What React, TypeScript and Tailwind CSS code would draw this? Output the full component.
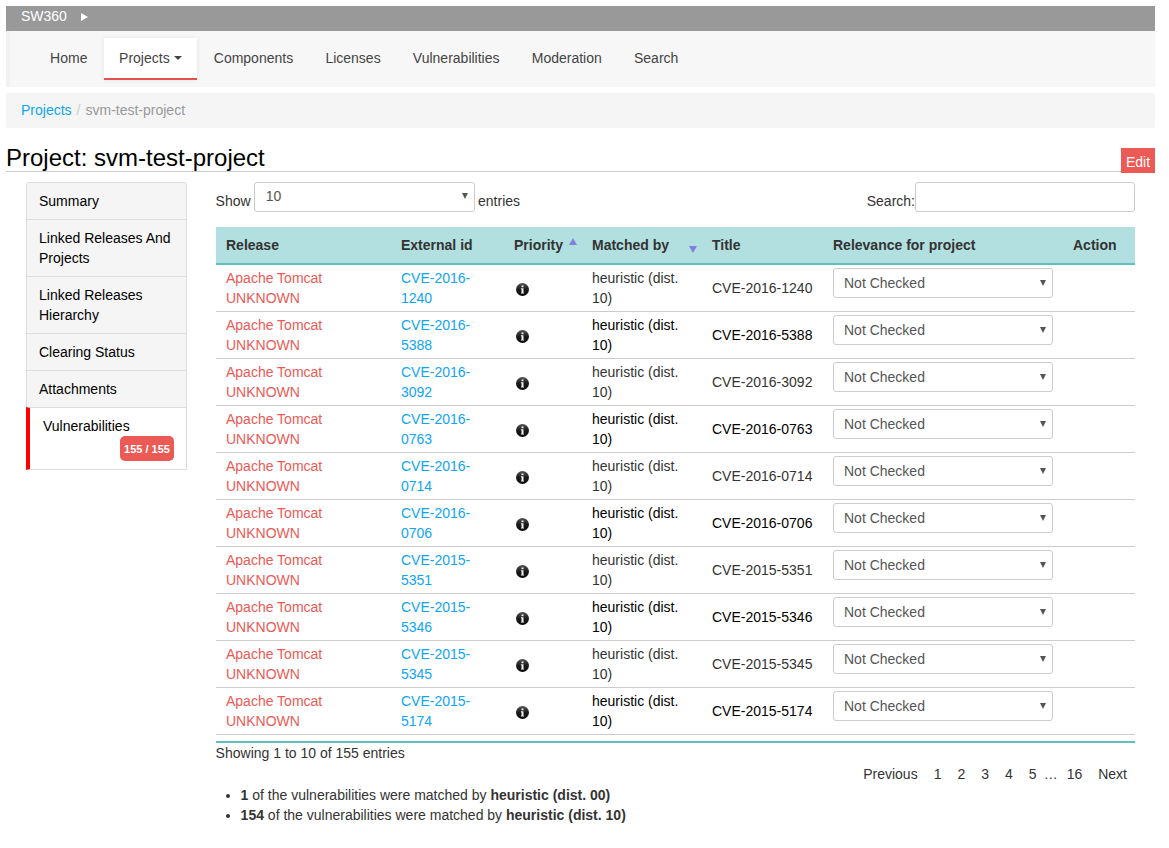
import { FC } from 'react';

const NAV_ITEMS = ['Home', 'Projects', 'Components', 'Licenses', 'Vulnerabilities', 'Moderation', 'Search'];

const SIDE_ITEMS = ['Summary', 'Linked Releases And Projects', 'Linked Releases Hierarchy', 'Clearing Status', 'Attachments'];

const CVES = [
  ['2016', '1240'],
  ['2016', '5388'],
  ['2016', '3092'],
  ['2016', '0763'],
  ['2016', '0714'],
  ['2016', '0706'],
  ['2015', '5351'],
  ['2015', '5346'],
  ['2015', '5345'],
  ['2015', '5174'],
];

const InfoIcon: FC<{ id: string }> = ({ id }) => (
  <svg width="13" height="13" viewBox="0 0 13 13" className="block">
    <defs>
      <linearGradient id={id} x1="0" y1="0" x2="0" y2="1">
        <stop offset="0" stopColor="#555" />
        <stop offset="0.5" stopColor="#1a1a1a" />
        <stop offset="1" stopColor="#0a0a0a" />
      </linearGradient>
    </defs>
    <circle cx="6.5" cy="6.5" r="6.5" fill={`url(#${id})`} />
    <rect x="5.5" y="2.5" width="2" height="1.7" fill="#f2f2f2" />
    <path d="M4.9 5.3h2.6v4.4h0.6v0.9H4.9v-0.9h0.6V6.2H4.9z" fill="#f2f2f2" />
  </svg>
);

const VulnRow: FC<{ year: string; id: string; index: number }> = ({ year, id, index }) => {
  const textColor = index % 2 === 0 ? 'text-[#333]' : 'text-black';
  return (
    <tr className="h-[47px] align-top">
      <td className="border-b border-[#ccc] pl-[10px] pt-[3px] text-[#ec5a55]">
        Apache Tomcat
        <br />
        UNKNOWN
      </td>
      <td className="border-b border-[#ccc] pl-[10px] pt-[3px] text-[#0ea5f5]">
        CVE-{year}-
        <br />
        {id}
      </td>
      <td className="border-b border-[#ccc] pl-[12px] pt-[18px]">
        <InfoIcon id={`info-${id}`} />
      </td>
      <td className={`border-b border-[#ccc] pl-[10px] pt-[3px] ${textColor}`}>
        heuristic (dist.
        <br />
        10)
      </td>
      <td className={`border-b border-[#ccc] pl-[10px] pt-[13px] ${textColor}`}>
        CVE-{year}-{id}
      </td>
      <td className="border-b border-[#ccc] pl-[10px] pt-[3px]">
        <div className="flex h-[30px] w-[220px] items-center justify-between rounded-[3px] border border-[#ccc] pl-[10px] pr-[6px] text-[#555]">
          <span>Not Checked</span>
          <span className="h-0 w-0 border-x-[3.5px] border-t-[6px] border-x-transparent border-t-[#555]" />
        </div>
      </td>
      <td className="border-b border-[#ccc]" />
    </tr>
  );
};

export default function App() {
  return (
    <div className="min-h-[848px] bg-white px-[6px] pt-[6px] pr-[14px] font-['Liberation_Sans',sans-serif] text-[14px] leading-[20px] text-[#333]">
      {/* Top bar */}
      <div className="flex h-[25px] items-center bg-[#999] pl-[15px] pb-[5px] text-white">
        <span>SW360</span>
        <span className="ml-[14px] mt-[1px] h-0 w-0 border-y-[4.5px] border-l-[7px] border-y-transparent border-l-white" />
      </div>

      {/* Main nav */}
      <nav className="flex h-[56px] items-center border-l-[4px] border-[#f1f1f1] bg-[#f7f7f7] pb-[2px] pl-[24px]">
        {NAV_ITEMS.map((item) =>
          item === 'Projects' ? (
            <a
              key={item}
              className="ml-[0.5px] mr-[1px] mt-[2px] flex h-[42px] items-center gap-[4px] border-b-2 border-[#e4514b] bg-white px-[15px] text-[#444] shadow-[0_0_5px_rgba(0,0,0,0.08)]"
            >
              {item}
              <span className="h-0 w-0 border-x-[4.5px] border-t-[4.5px] border-x-transparent border-t-[#444]" />
            </a>
          ) : (
            <a key={item} className="px-[16.12px] text-[#444]">
              {item}
            </a>
          ),
        )}
      </nav>

      {/* Breadcrumb */}
      <div className="mt-[6px] flex h-[35px] items-center rounded-[2px] bg-[#f5f5f5] pb-[2px] pl-[15px]">
        <a className="text-[#0ea5f5]">Projects</a>
        <span className="px-[5px] text-[#ccc]">/</span>
        <span className="text-[#999]">svm-test-project</span>
      </div>

      {/* Page title */}
      <div className="relative mt-[16px] h-[28px] border-b border-[#ccc]">
        <h1 className="text-[24px] leading-[28px] text-black">Project: svm-test-project</h1>
        <button className="absolute right-0 top-[4px] h-[25px] w-[34px] bg-[#ec5a55] pt-[2px] text-center text-white">
          Edit
        </button>
      </div>

      <div className="mt-[10px] flex items-start pl-[20px] pr-[20px]">
        {/* Side tabs */}
        <aside className="w-[161px] shrink-0 rounded-t-[3px] border-x border-t border-[#ddd] text-black">
          {SIDE_ITEMS.map((item) => (
            <div key={item} className="border-b border-[#ddd] bg-[#f5f5f5] px-[12px] py-[8px]">
              {item}
            </div>
          ))}
          <div className="relative -ml-px -mt-px h-[63px] border-y border-l-[4px] border-y-[#ddd] border-l-[#f00] bg-white pl-[13px] pt-[8px]">
            Vulnerabilities
            <span className="absolute right-[12px] top-[28px] flex h-[25px] w-[54px] items-center justify-center rounded-[5px] bg-[#ec5a55] text-[11px] font-bold text-white">
              155 / 155
            </span>
          </div>
        </aside>

        {/* Table area */}
        <main className="ml-[29px] min-w-0 flex-1">
          <div className="flex h-[30px] items-start justify-between">
            <div className="flex items-start">
              <span className="ml-[-0.4px] mt-[9px]">Show</span>
              <div className="ml-[3px] flex h-[30px] w-[221px] items-center justify-between rounded-[3px] border border-[#ccc] pl-[11px] pr-[6px] pb-[2px] text-[#555]">
                <span>10</span>
                <span className="h-0 w-0 border-x-[3.5px] border-t-[6px] border-x-transparent border-t-[#555]" />
              </div>
              <span className="ml-[3.4px] mt-[9px]">entries</span>
            </div>
            <div className="flex items-start">
              <span className="mt-[9px]">Search:</span>
              <input className="h-[30px] w-[220px] rounded-[3px] border border-[#ccc]" />
            </div>
          </div>

          <table className="mt-[15px] w-[919px] table-fixed border-separate border-spacing-0">
            <colgroup>
              <col className="w-[175px]" />
              <col className="w-[113px]" />
              <col className="w-[78px]" />
              <col className="w-[120px]" />
              <col className="w-[121px]" />
              <col className="w-[240px]" />
              <col className="w-[72px]" />
            </colgroup>
            <thead>
              <tr className="h-[38px] bg-[#b2dfdf] text-left font-bold">
                <th className="border-b-2 border-[#62bfbe] pl-[10px]">Release</th>
                <th className="border-b-2 border-[#62bfbe] pl-[10px]">External id</th>
                <th className="relative border-b-2 border-[#62bfbe] pl-[10px]">
                  Priority
                  <span className="absolute right-[5px] top-[11px] h-0 w-0 border-x-[4.5px] border-b-[7px] border-x-transparent border-b-[#8080e0]" />
                </th>
                <th className="relative border-b-2 border-[#62bfbe] pl-[10px]">
                  Matched by
                  <span className="absolute right-[5px] top-[19px] h-0 w-0 border-x-[4.5px] border-t-[7px] border-x-transparent border-t-[#8080e0]" />
                </th>
                <th className="border-b-2 border-[#62bfbe] pl-[10px]">Title</th>
                <th className="border-b-2 border-[#62bfbe] pl-[10px]">Relevance for project</th>
                <th className="border-b-2 border-[#62bfbe] pl-[10px]">Action</th>
              </tr>
            </thead>
            <tbody>
              {CVES.map(([year, id], index) => (
                <VulnRow key={id} year={year} id={id} index={index} />
              ))}
            </tbody>
          </table>

          <div className="mt-[6px] h-[2px] bg-[#62bfbe]" />
          <div className="ml-[-0.4px]">Showing 1 to 10 of 155 entries</div>

          <div className="mt-[1px] flex justify-end pr-[8px]">
            <span>Previous</span>
            <span className="ml-[16px]">1</span>
            <span className="ml-[16px]">2</span>
            <span className="ml-[16px]">3</span>
            <span className="ml-[16px]">4</span>
            <span className="ml-[16px]">5</span>
            <span className="ml-[7px]">…</span>
            <span className="ml-[9px]">16</span>
            <span className="ml-[16px]">Next</span>
          </div>

          <ul className="ml-[-0.4px] mt-[1px] list-disc pl-[25px]">
            <li>
              <b>1</b> of the vulnerabilities were matched by <b>heuristic (dist. 00)</b>
            </li>
            <li>
              <b>154</b> of the vulnerabilities were matched by <b>heuristic (dist. 10)</b>
            </li>
          </ul>
        </main>
      </div>
    </div>
  );
}
